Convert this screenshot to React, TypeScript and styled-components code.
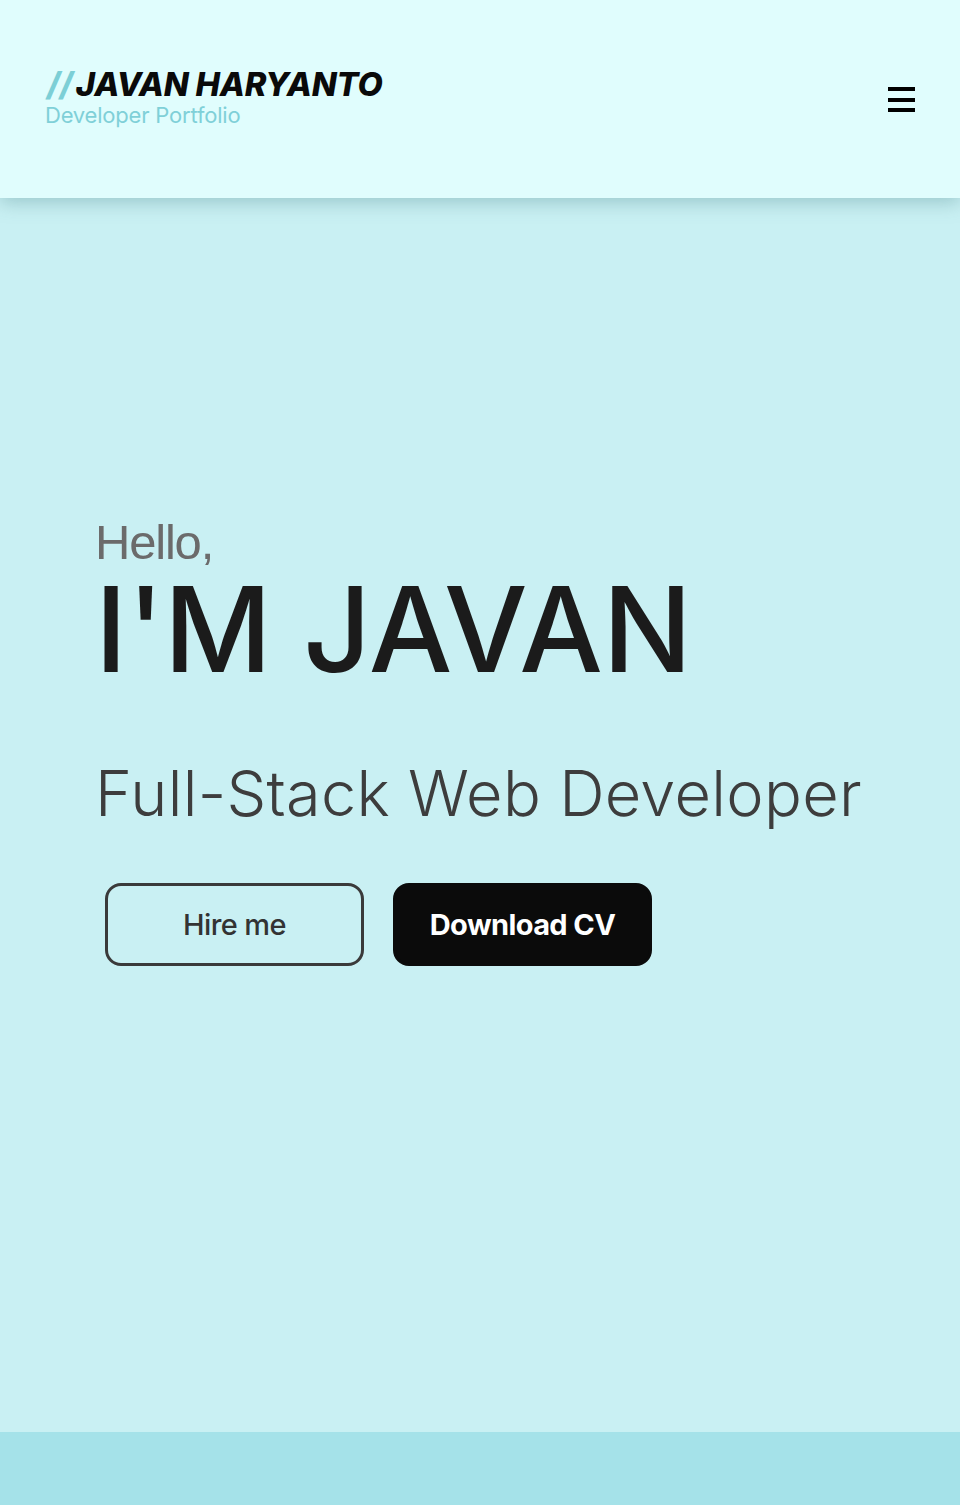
import React from "react";
import styled, { createGlobalStyle } from "styled-components";

const Global = createGlobalStyle`
  html, body { margin: 0; padding: 0; }
  body { background: #c9f0f3; font-family: "Inter", "Liberation Sans", sans-serif; }
  * { box-sizing: border-box; }
`;

const Page = styled.div`
  display: flex;
  flex-direction: column;
  min-height: 1505px;
`;

const Header = styled.header`
  position: relative;
  z-index: 2;
  height: 198px;
  background: #e0fdfd;
  box-shadow: 0 4px 18px rgba(60, 120, 125, 0.35);
  display: flex;
  align-items: center;
  justify-content: space-between;
  padding: 0 45px 0 45px;
`;

const Brand = styled.div`
  display: flex;
  flex-direction: column;
  margin-top: -4px;
`;

const BrandName = styled.div`
  font-family: "Inter", sans-serif;
  font-weight: 800;
  font-style: italic;
  font-size: 32.7px;
  letter-spacing: -0.2px;
  line-height: 36px;
  color: #0a0a0a;
  white-space: nowrap;
`;

const Slashes = styled.span`
  color: #7ccfd6;
  margin-left: 2px;
  margin-right: 3px;
`;

const BrandSub = styled.div`
  font-family: "Inter", sans-serif;
  font-size: 22px;
  font-weight: 400;
  color: #7fd0d8;
  line-height: 26px;
  letter-spacing: -0.2px;
`;

const Burger = styled.div`
  width: 27px;
  height: 25px;
  display: flex;
  flex-direction: column;
  justify-content: space-between;
  margin-top: 1px;
`;

const BurgerLine = styled.span`
  display: block;
  height: 4px;
  background: #000;
`;

const Hero = styled.main`
  flex: 1;
  background: #c9f0f3;
  display: flex;
  flex-direction: column;
  justify-content: flex-start;
  padding: 320px 0 0 95px;
  height: 1234px;
`;

const Hello = styled.div`
  font-family: "Liberation Sans", Arial, sans-serif;
  font-size: 49px;
  color: #6b6b6b;
  line-height: 48px;
  letter-spacing: -1.2px;
`;

const Name = styled.h1`
  margin: 10px 0 0;
  font-family: "Inter", sans-serif;
  font-weight: 500;
  font-size: 118px;
  line-height: 106px;
  color: #1b1b1b;
  letter-spacing: 0px;
`;

const Role = styled.h2`
  margin: 75px 0 0;
  font-family: "Inter", sans-serif;
  font-weight: 300;
  font-size: 63px;
  line-height: 72px;
  color: #3d3d3d;
  letter-spacing: 0.3px;
`;

const Actions = styled.div`
  display: flex;
  gap: 29px;
  margin: 54px 0 0 10px;
`;

const Button = styled.button<{ $primary?: boolean }>`
  width: 259px;
  height: 83px;
  border-radius: 16px;
  font-family: "Inter", sans-serif;
  font-size: 29px;
  letter-spacing: -0.6px;
  cursor: pointer;
  border: 3px solid ${(p) => (p.$primary ? "#0b0b0b" : "#3a3a3a")};
  background: ${(p) => (p.$primary ? "#0b0b0b" : "transparent")};
  color: ${(p) => (p.$primary ? "#ffffff" : "#333333")};
  font-weight: ${(p) => (p.$primary ? 700 : 500)};
`;

const Footer = styled.footer`
  height: 73px;
  background: #a5e2e9;
`;

export default function App() {
  return (
    <Page>
      <Global />
      <Header>
        <Brand>
          <BrandName>
            <Slashes>//</Slashes>JAVAN HARYANTO
          </BrandName>
          <BrandSub>Developer Portfolio</BrandSub>
        </Brand>
        <Burger aria-label="menu">
          <BurgerLine />
          <BurgerLine />
          <BurgerLine />
        </Burger>
      </Header>
      <Hero>
        <Hello>Hello,</Hello>
        <Name>I'M JAVAN</Name>
        <Role>Full-Stack Web Developer</Role>
        <Actions>
          <Button>Hire me</Button>
          <Button $primary>Download CV</Button>
        </Actions>
      </Hero>
      <Footer />
    </Page>
  );
}
